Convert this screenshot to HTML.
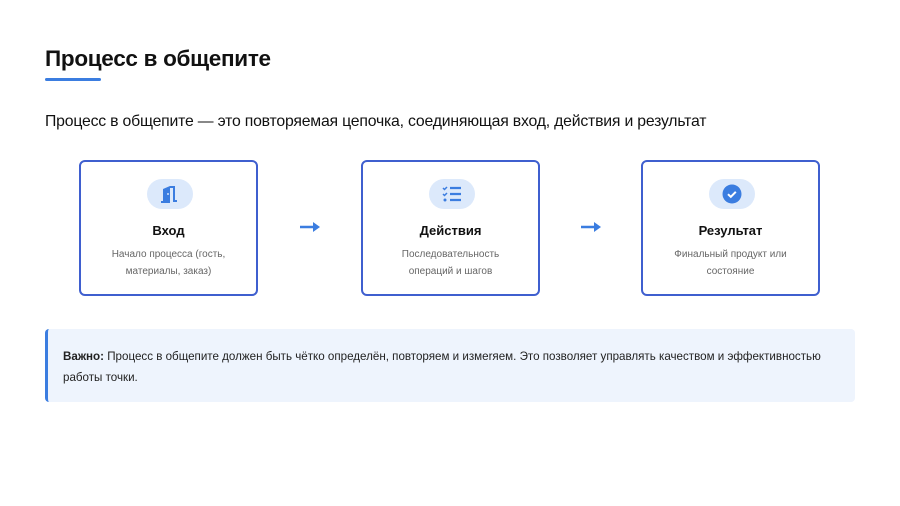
<!DOCTYPE html>
<html><head><meta charset="utf-8"><style>
body{margin:0;width:900px;height:506px;background:#fff;font-family:"Liberation Sans",sans-serif;position:relative;overflow:hidden;color:#111}
.a{position:absolute}
h1{position:absolute;left:45px;top:46px;margin:0;font-size:22.5px;font-weight:bold;letter-spacing:-0.3px}
.ul{left:45px;top:78px;width:56px;height:3px;background:#3b7de0;border-radius:2px}
.sub{left:45px;top:113px;font-size:15.8px;letter-spacing:-0.2px}
.card{position:absolute;top:160px;width:175px;height:132px;border:2px solid #3f5fcf;border-radius:6px;text-align:center}
.pill{position:absolute;left:66px;top:17px;width:46px;height:30px;border-radius:15px;background:#dce9fb}
.pill svg{position:absolute;left:12px;top:4px}
.t{position:absolute;left:0;right:0;top:61px;font-size:13px;font-weight:bold}
.d{position:absolute;left:0;right:0;top:84px;font-size:10px;line-height:17px;color:#666}
.arr{position:absolute;top:221px}
.call{left:45px;top:329px;width:807px;height:73px;background:#eef4fd;border-left:3px solid #3b7de0;border-radius:4px}
.call p{margin:0;position:absolute;left:15px;top:17px;width:780px;font-size:11.6px;line-height:21px;color:#222}
</style></head><body>
<h1>Процесс в общепите</h1>
<div class="a ul"></div>
<div class="a sub">Процесс в общепите — это повторяемая цепочка, соединяющая вход, действия и результат</div>

<div class="card" style="left:79px">
<div class="pill"><svg width="22" height="22" viewBox="0 0 22 22"><path d="M4 19V6l7-3v16z" fill="#3b7de0"/><rect x="2" y="18" width="9" height="2" fill="#3b7de0"/><path d="M11 4h4v14h3" stroke="#3b7de0" stroke-width="2" fill="none"/><circle cx="9" cy="11" r="0.9" fill="#fff"/></svg></div>
<div class="t">Вход</div><div class="d">Начало процесса (гость,<br>материалы, заказ)</div></div>

<svg class="arr" style="left:299px" width="22" height="12" viewBox="0 0 22 12"><path d="M1 6h17" stroke="#3b7de0" stroke-width="2.5"/><path d="M14 1l7 5-7 5z" fill="#3b7de0"/></svg>

<div class="card" style="left:361px">
<div class="pill"><svg width="22" height="22" viewBox="0 0 22 22"><path d="M2 5l1.5 1.5L6 4M2 11l1.5 1.5L6 10" stroke="#3b7de0" stroke-width="1.5" fill="none"/><circle cx="4" cy="17" r="1.5" fill="#3b7de0"/><path d="M9 5h11M9 11h11M9 17h11" stroke="#3b7de0" stroke-width="2.2"/></svg></div>
<div class="t">Действия</div><div class="d">Последовательность<br>операций и шагов</div></div>

<svg class="arr" style="left:580px" width="22" height="12" viewBox="0 0 22 12"><path d="M1 6h17" stroke="#3b7de0" stroke-width="2.5"/><path d="M14 1l7 5-7 5z" fill="#3b7de0"/></svg>

<div class="card" style="left:641px">
<div class="pill"><svg width="22" height="22" viewBox="0 0 22 22"><circle cx="11" cy="11" r="9.5" fill="#3b7de0"/><path d="M7 11.2l2.8 2.6 5-5" stroke="#fff" stroke-width="2" fill="none"/></svg></div>
<div class="t">Результат</div><div class="d">Финальный продукт или<br>состояние</div></div>

<div class="a call"><p><b>Важно:</b> Процесс в общепите должен быть чётко определён, повторяем и измеrяем. Это позволяет управлять качеством и эффективностью<br>работы точки.</p></div>
</body></html>
